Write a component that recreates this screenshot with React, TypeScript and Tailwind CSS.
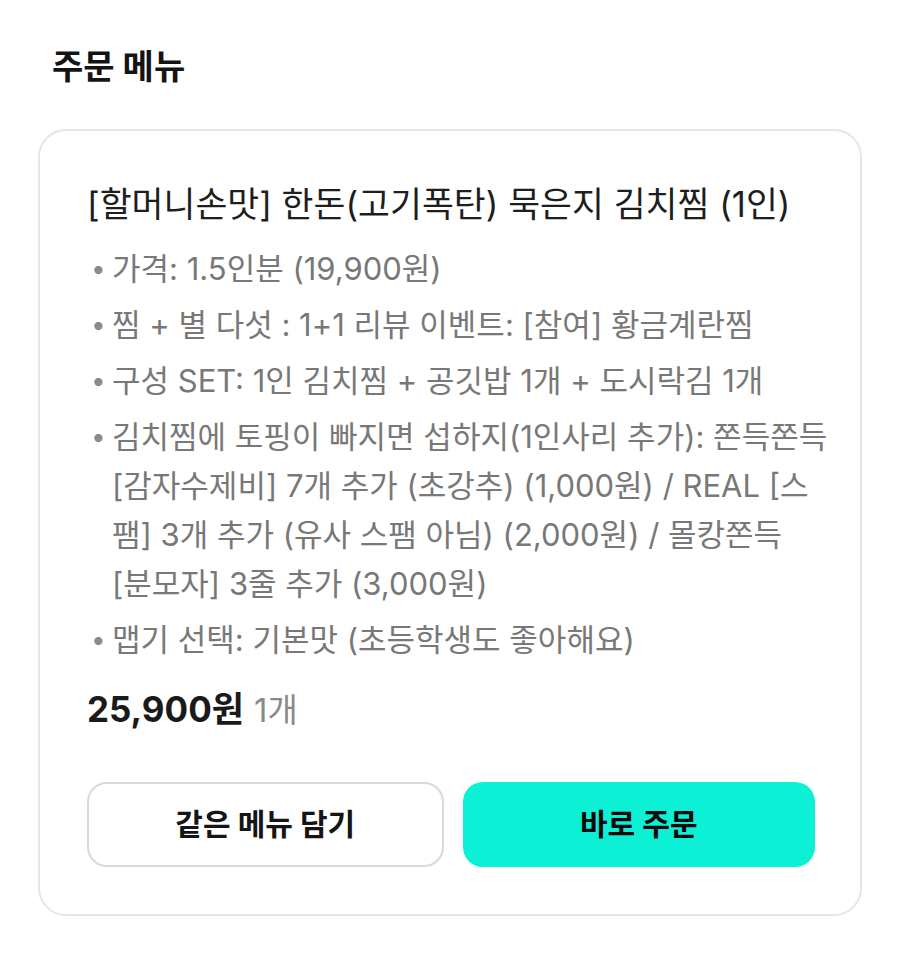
const font = { fontFamily: '"Inter", "Noto Sans CJK KR", sans-serif' };

const options: string[][] = [
  ["가격: 1.5인분 (19,900원)"],
  ["찜 + 별 다섯 : 1+1 리뷰 이벤트: [참여] 황금계란찜"],
  ["구성 SET: 1인 김치찜 + 공깃밥 1개 + 도시락김 1개"],
  [
    "김치찜에 토핑이 빠지면 섭하지(1인사리 추가): 쫀득쫀득",
    "[감자수제비] 7개 추가 (초강추) (1,000원) / REAL [스",
    "팸] 3개 추가 (유사 스팸 아님) (2,000원) / 몰캉쫀득",
    "[분모자] 3줄 추가 (3,000원)",
  ],
  ["맵기 선택: 기본맛 (초등학생도 좋아해요)"],
];

export default function App() {
  return (
    <div className="w-[900px] h-[965px] bg-white" style={font}>
      <div className="pt-[44px] px-[38px]">
        <h2 className="pl-[14px] text-[34px] leading-[46px] font-bold text-[#141414]">
          주문 메뉴
        </h2>

        <div className="mt-[39px] w-[824px] border-2 border-[#e6e6e8] rounded-[28px] pl-[47px] pr-[45px] pt-[50px] pb-[47px]">
          <h3 className="text-[34.7px] leading-[46px] text-[#1e1e1e] whitespace-nowrap">
            [할머니손맛] 한돈(고기폭탄) 묵은지 김치찜 (1인)
          </h3>

          <ul className="mt-[17px] flex flex-col gap-[7px]">
            {options.map((lines) => (
              <li
                key={lines[0]}
                className="flex text-[31px] leading-[49px] text-[#787878]"
              >
                <span className="w-[25px] shrink-0 pl-[4px] text-[26px] text-[#8a8a8a]">•</span>
                <span className="flex flex-col whitespace-nowrap">
                  {lines.map((l) => (
                    <span key={l}>{l}</span>
                  ))}
                </span>
              </li>
            ))}
          </ul>

          <div className="mt-[22px] flex items-baseline gap-[10px]">
            <span className="text-[35px] leading-[46px] font-bold text-[#1a1a1a]">
              25,900원
            </span>
            <span className="text-[33px] text-[#8a8a8a]">1개</span>
          </div>

          <div className="mt-[46px] flex gap-[19px]">
            <button
              type="button"
              className="flex-1 h-[85px] rounded-[20px] border-2 border-[#d9d9dc] bg-white text-[30px] font-bold text-[#151515]"
            >
              같은 메뉴 담기
            </button>
            <button
              type="button"
              className="flex-1 h-[85px] rounded-[20px] bg-[#0cf0d6] text-[30px] font-bold text-[#0a0a0a]"
            >
              바로 주문
            </button>
          </div>
        </div>
      </div>
    </div>
  );
}
